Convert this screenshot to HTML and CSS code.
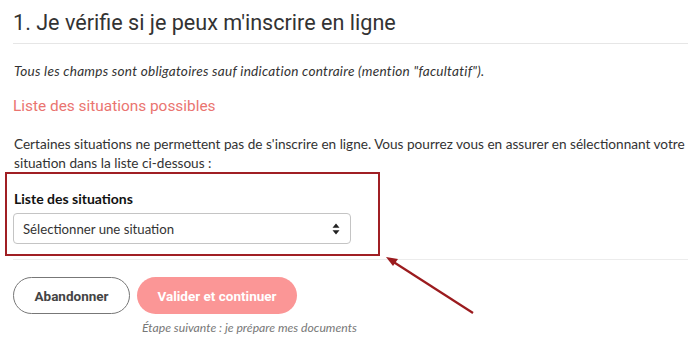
FILE: index.html
```html
<!DOCTYPE html>
<html lang="fr">
<head>
<meta charset="utf-8">
<title>Je vérifie si je peux m'inscrire en ligne</title>
<link rel="stylesheet" href="styles.css">
</head>
<body>
<main class="page">
  <h1 class="title">1. Je vérifie si je peux m'inscrire en ligne</h1>
  <p class="note">Tous les champs sont obligatoires sauf indication contraire (mention "facultatif").</p>
  <h2 class="subtitle">Liste des situations possibles</h2>
  <p class="intro">Certaines situations ne permettent pas de s'inscrire en ligne. Vous pourrez vous en assurer en sélectionnant votre situation dans la liste ci-dessous :</p>
  <div class="field highlight">
    <label class="label" for="situation">Liste des situations</label>
    <div class="select">
      <span class="select-text">Sélectionner une situation</span>
      <svg class="select-arrows" width="8" height="12" viewBox="0 0 8 12"><path d="M4 0.5 L7.5 4.8 H0.5 Z M4 11.5 L7.5 7.2 H0.5 Z" fill="#222"/></svg>
    </div>
  </div>
  <hr class="sep">
  <div class="actions">
    <button class="btn btn-outline">Abandonner</button>
    <div class="next">
      <button class="btn btn-primary">Valider et continuer</button>
      <p class="next-hint">Étape suivante : je prépare mes documents</p>
    </div>
  </div>
  <svg class="arrow" width="700" height="344" viewBox="0 0 700 344">
    <line x1="473" y1="313" x2="392" y2="261" stroke="#9b1b1e" stroke-width="2.2"/>
    <path d="M386 257 L398 259 L393 266 Z" fill="#9b1b1e"/>
  </svg>
</main>
</body>
</html>
```
FILE: styles.css
```css
html, body {
  margin: 0;
  padding: 0;
  background: #ffffff;
}
body {
  font-family: Lato, "Open Sans", sans-serif;
  color: #333333;
}
.page {
  position: relative;
  width: 700px;
  height: 344px;
  padding: 0 12px 0 13px;
  box-sizing: border-box;
  overflow: hidden;
}
.title {
  margin: 0;
  padding-top: 8px;
  font-family: Roboto, sans-serif;
  font-weight: 400;
  font-size: 21.6px;
  line-height: 30px;
  color: #333333;
  padding-bottom: 5px;
  border-bottom: 1px solid #e6e6e6;
}
.note {
  margin: 18px 0 0 1px;
  font-style: italic;
  font-size: 13.6px;
  letter-spacing: 0.25px;
  line-height: 18px;
  color: #333;
}
.subtitle {
  margin: 16px 0 0 0;
  font-family: Roboto, sans-serif;
  font-weight: 400;
  font-size: 15.4px;
  line-height: 20px;
  color: #ea7470;
}
.intro {
  margin: 19px 0 0 1px;
  font-size: 13.6px;
  line-height: 19px;
  color: #333;
}
.highlight {
  width: 375px;
  box-sizing: border-box;
  margin: -1px 0 0 -8px;
  padding: 16px 27px 10px 6px;
  border: 2px solid #a01f24;
}
.label {
  display: block;
  margin-left: 1px;
  font-size: 14px;
  font-weight: 700;
  line-height: 18px;
  color: #111;
}
.select {
  margin-top: 5px;
  height: 31px;
  box-sizing: border-box;
  border: 1px solid #c4c4c4;
  border-radius: 4px;
  display: flex;
  align-items: center;
  justify-content: space-between;
  padding: 0 10px 0 9px;
}
.select-text {
  font-size: 13.2px;
  color: #333;
}
.select-arrows {
  display: block;
}
.sep {
  margin: 3px 0 0 0;
  border: 0;
  border-top: 1px solid #ececec;
}
.actions {
  margin-top: 17px;
  display: flex;
  gap: 7px;
  align-items: flex-start;
}
.btn {
  height: 37px;
  border-radius: 19px;
  font-family: Roboto, sans-serif;
  font-weight: 700;
  font-size: 13.5px;
  cursor: pointer;
}
.btn-outline {
  width: 117px;
  background: #fff;
  border: 1px solid #777;
  color: #444;
}
.btn-primary {
  width: 160px;
  background: #fb9696;
  border: 0;
  color: #ffffff;
}
.next {
  display: flex;
  flex-direction: column;
}
.next-hint {
  margin: 6px 0 0 5px;
  font-style: italic;
  font-size: 12.2px;
  line-height: 16px;
  color: #777;
  white-space: nowrap;
}
.arrow {
  position: absolute;
  left: 0;
  top: 0;
  pointer-events: none;
}
```
